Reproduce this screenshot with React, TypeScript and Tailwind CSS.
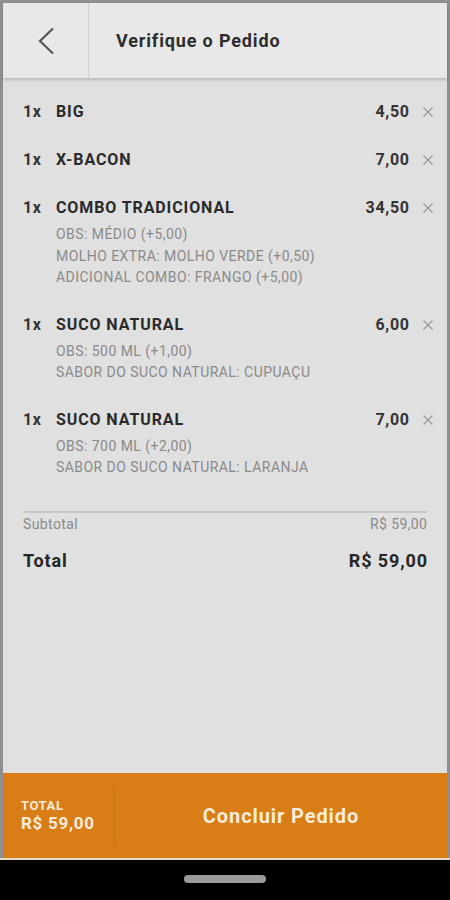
import React from "react";

type Item = { qty: string; name: string; price: string; obs: string[] };

const items: Item[] = [
  { qty: "1x", name: "BIG", price: "4,50", obs: [] },
  { qty: "1x", name: "X-BACON", price: "7,00", obs: [] },
  {
    qty: "1x",
    name: "COMBO TRADICIONAL",
    price: "34,50",
    obs: ["OBS: MÉDIO (+5,00)", "MOLHO EXTRA: MOLHO VERDE (+0,50)", "ADICIONAL COMBO: FRANGO (+5,00)"],
  },
  { qty: "1x", name: "SUCO NATURAL", price: "6,00", obs: ["OBS: 500 ML (+1,00)", "SABOR DO SUCO NATURAL: CUPUAÇU"] },
  { qty: "1x", name: "SUCO NATURAL", price: "7,00", obs: ["OBS: 700 ML (+2,00)", "SABOR DO SUCO NATURAL: LARANJA"] },
];

function Row({ item }: { item: Item }) {
  const hasObs = item.obs.length > 0;
  return (
    <div className={hasObs ? "pt-[14px] pb-[12px]" : "py-[14px]"}>
      <div className="flex items-center h-[20px] mr-[-6px]">
        <span className="w-[33px] text-[16px] font-bold text-[#333] tracking-[0.6px]">{item.qty}</span>
        <span className="flex-1 text-[16px] font-bold text-[#2a2a2a] tracking-[0.9px]">{item.name}</span>
        <span className="text-[16px] font-bold text-[#333] tracking-[0.7px] mr-[-0.7px]">{item.price}</span>
        <span className="w-[24px] flex justify-end">
          <svg width="10" height="10" viewBox="0 0 10 10">
            <path d="M0.5 0.5L9.5 9.5M9.5 0.5L0.5 9.5" stroke="#9a9a9a" strokeWidth="1.3" />
          </svg>
        </span>
      </div>
      {hasObs && (
        <div className="pl-[33px] mt-[6px]">
          {item.obs.map((o, i) => (
            <div key={i} className="text-[14px] leading-[21.5px] text-[#8a8a8a] tracking-[0.45px]">
              {o}
            </div>
          ))}
        </div>
      )}
    </div>
  );
}

export default function App() {
  return (
    <div
      className="w-[450px] h-[900px] flex flex-col bg-[#8f8f8f] pt-[3px]"
      style={{ fontFamily: "Roboto, 'Noto Sans', Arial, sans-serif" }}
    >
      <div className="flex-1 flex flex-col mx-[3px] bg-[#e0e0e0]">
        <div className="h-[75px] flex bg-[#e8e8e8] shadow-[0_2px_3px_rgba(0,0,0,0.18)] relative z-10">
          <div className="w-[86px] flex items-center justify-center border-r border-[#d2d2d2]">
            <svg width="18" height="28" viewBox="0 0 18 28">
              <path d="M16 1.5L3 14L16 26.5" fill="none" stroke="#555" strokeWidth="2.2" />
            </svg>
          </div>
          <div className="flex-1 flex items-center pl-[27px] text-[18px] font-bold text-[#2d2d2d] tracking-[0.85px]">
            Verifique o Pedido
          </div>
        </div>
        <div className="flex-1 px-[20px] pt-[10px]">
          {items.map((it, i) => (
            <Row key={i} item={it} />
          ))}
          <div className="mt-[20px] border-t-2 border-[#c8c8c8]" />
          <div className="flex justify-between items-center h-[20px] mt-[2px] text-[14px] text-[#8a8a8a] tracking-[0.4px]">
            <span>Subtotal</span>
            <span className="mr-[-0.4px]">R$ 59,00</span>
          </div>
          <div className="flex justify-between items-center h-[30px] mt-[11px] text-[18px] font-bold text-[#262626] tracking-[0.9px]">
            <span>Total</span>
            <span className="mr-[-1px]">R$ 59,00</span>
          </div>
        </div>
        <div className="h-[85px] flex bg-[#d97d17] text-[#f8ebd9]">
          <div className="w-[112px] my-[15px] border-r border-[#c56f12] flex flex-col justify-center pl-[18px]">
            <div className="text-[13px] font-bold leading-[15px] tracking-[0.6px]">TOTAL</div>
            <div className="text-[17px] font-bold leading-[20px] tracking-[0.7px]">R$ 59,00</div>
          </div>
          <div className="flex-1 flex items-center justify-center text-[20px] font-bold tracking-[0.9px]">
            Concluir Pedido
          </div>
        </div>
      </div>
      <div className="h-[2px] bg-[#e6dccb]" />
      <div className="h-[40px] bg-black flex items-center justify-center">
        <div className="w-[82px] h-[8px] rounded-full bg-[#9b9b9b] mt-[-3px]" />
      </div>
    </div>
  );
}
